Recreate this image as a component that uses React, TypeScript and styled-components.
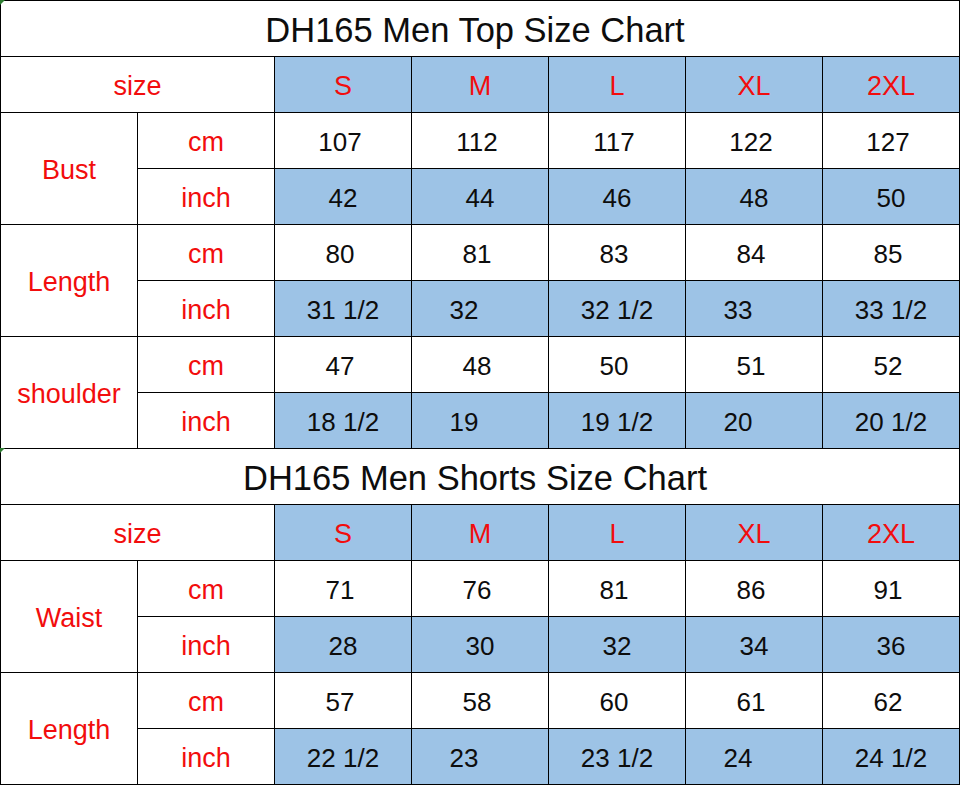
import React from "react";
import styled, { createGlobalStyle, css } from "styled-components";

const GlobalStyle = createGlobalStyle`
  html, body {
    margin: 0;
    padding: 0;
    background: #ffffff;
  }
  body {
    font-family: "Liberation Sans", Arial, sans-serif;
  }
`;

type Measure = {
  name: string;
  cm: string[];
  inch: string[];
  fraction: boolean;
};

type Chart = {
  title: string;
  sizes: string[];
  measures: Measure[];
};

const SIZES = ["S", "M", "L", "XL", "2XL"];

const charts: Chart[] = [
  {
    title: "DH165 Men Top Size Chart",
    sizes: SIZES,
    measures: [
      { name: "Bust", cm: ["107", "112", "117", "122", "127"], inch: ["42", "44", "46", "48", "50"], fraction: false },
      { name: "Length", cm: ["80", "81", "83", "84", "85"], inch: ["31 1/2", "32", "32 1/2", "33", "33 1/2"], fraction: true },
      { name: "shoulder", cm: ["47", "48", "50", "51", "52"], inch: ["18 1/2", "19", "19 1/2", "20", "20 1/2"], fraction: true },
    ],
  },
  {
    title: "DH165 Men Shorts Size Chart",
    sizes: SIZES,
    measures: [
      { name: "Waist", cm: ["71", "76", "81", "86", "91"], inch: ["28", "30", "32", "34", "36"], fraction: false },
      { name: "Length", cm: ["57", "58", "60", "61", "62"], inch: ["22 1/2", "23", "23 1/2", "24", "24 1/2"], fraction: true },
    ],
  },
];

const Sheet = styled.div`
  width: 960px;
  border-bottom: 1px solid #000;
`;

const ChartGrid = styled.div`
  display: grid;
  grid-template-columns: repeat(7, 136px);
  grid-auto-rows: 55px;
  gap: 1px;
  padding: 1px 1px 0 1px;
  background: #000;
  width: max-content;
`;

type CellProps = {
  $fill?: "white" | "blue";
  $ink?: "red" | "black";
  $span?: number;
  $rows?: number;
  $shift?: number;
};

const Cell = styled.div<CellProps>`
  display: flex;
  align-items: center;
  justify-content: center;
  padding-top: 3px;
  box-sizing: border-box;
  font-size: ${(p) => (p.$ink === "red" ? 27 : 26)}px;
  line-height: 1;
  white-space: pre;
  background: ${(p) => (p.$fill === "blue" ? "#9dc3e6" : "#ffffff")};
  color: ${(p) => (p.$ink === "red" ? "#f20d0d" : "#0d0d0d")};
  padding-right: ${(p) => (p.$shift ?? 0) * 2}px;
  ${(p) =>
    p.$span &&
    css`
      grid-column: span ${p.$span};
    `}
  ${(p) =>
    p.$rows &&
    css`
      grid-row: span ${p.$rows};
    `}
`;

const TitleCell = styled(Cell)`
  position: relative;
  font-size: 34.5px;
  grid-column: 1 / -1;
  padding-top: 4px;
  padding-right: 10px;

  &::before {
    content: "";
    position: absolute;
    top: -1px;
    left: -1px;
    border-top: 5px solid #2e7d32;
    border-right: 5px solid transparent;
  }
`;

function ChartTable({ chart }: { chart: Chart }) {
  return (
    <ChartGrid>
      <TitleCell>{chart.title}</TitleCell>
      <Cell $ink="red" $span={2}>
        size
      </Cell>
      {chart.sizes.map((s) => (
        <Cell key={s} $ink="red" $fill="blue">
          {s}
        </Cell>
      ))}
      {chart.measures.map((m) => (
        <React.Fragment key={m.name}>
          <Cell $ink="red" $rows={2}>
            {m.name}
          </Cell>
          <Cell $ink="red">cm</Cell>
          {m.cm.map((v, i) => (
            <Cell key={`cm-${i}`} $shift={3}>
              {v}
            </Cell>
          ))}
          <Cell $ink="red">inch</Cell>
          {m.inch.map((v, i) => (
            <Cell key={`in-${i}`} $fill="blue" $shift={m.fraction && !v.includes("/") ? 16 : 0}>
              {v}
            </Cell>
          ))}
        </React.Fragment>
      ))}
    </ChartGrid>
  );
}

export default function App() {
  return (
    <>
      <GlobalStyle />
      <Sheet>
        {charts.map((c) => (
          <ChartTable key={c.title} chart={c} />
        ))}
      </Sheet>
    </>
  );
}
